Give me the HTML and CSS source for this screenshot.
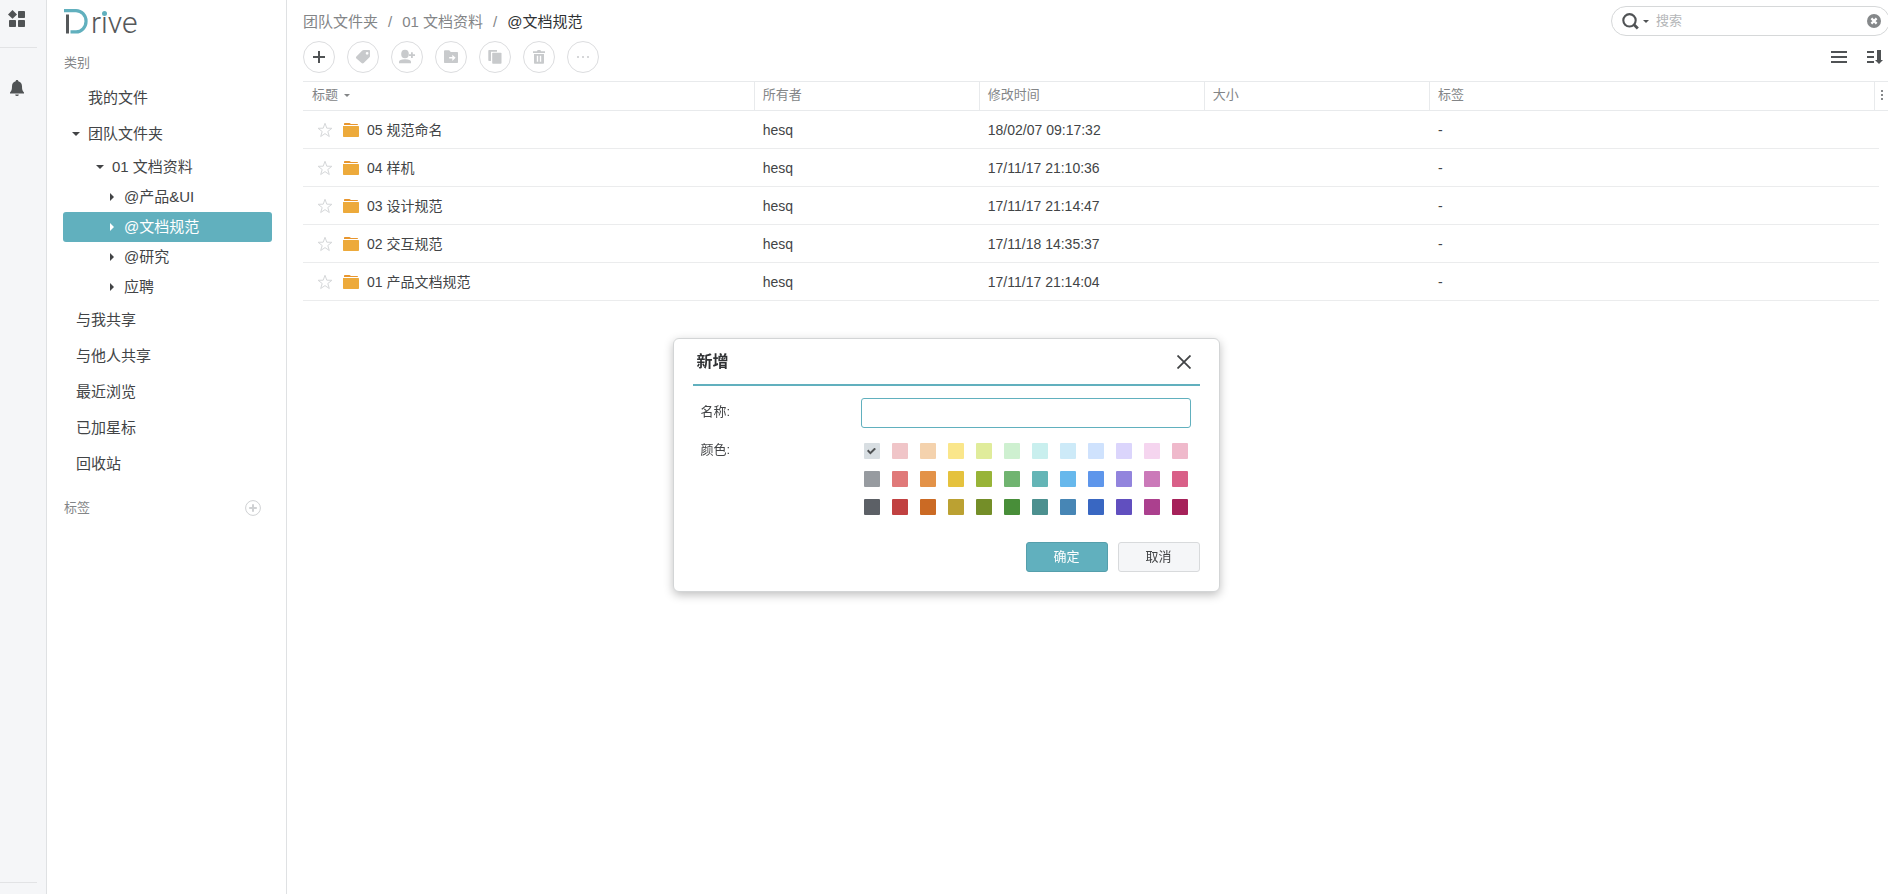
FILE: index.html
```html
<!DOCTYPE html>
<html lang="zh-CN">
<head>
<meta charset="utf-8">
<title>Drive</title>
<link rel="stylesheet" href="styles.css">
</head>
<body>
<div class="app">
  <nav class="rail" aria-label="应用">
    <button class="rail-btn apps" aria-label="应用列表">
      <svg width="18" height="18" viewBox="0 0 18 18" fill="currentColor"><path d="M4.500 0 9 4.400 4.500 8.800 0 4.400z"/><rect x="10" y="1" width="7" height="7" rx=".8"/><rect x="1" y="10" width="7" height="7" rx=".8"/><rect x="10" y="10" width="7" height="7" rx=".8"/></svg>
    </button>
    <button class="rail-btn bell" aria-label="通知">
      <svg width="14" height="16" viewBox="0 0 14 16" fill="currentColor"><path d="M7 0c.8 0 1.300.5 1.300 1.200C10.700 1.800 12 3.800 12 6.300c0 3.200.4 4.700 2 6.200v1H0v-1c1.600-1.500 2-3 2-6.200 0-2.500 1.300-4.500 3.700-5.100C5.700.5 6.200 0 7 0z"/><path d="M5.200 14.400h3.600a1.800 1.600 0 0 1-3.600 0z"/></svg>
    </button>
  </nav>

  <aside class="sidebar">
    <a class="logo" href="#" aria-label="Drive">
      <svg class="logo-mark" width="24" height="25" viewBox="0 0 24 25" fill="none"><path d="M3.500 5.500v19" stroke="#55585a" stroke-width="3"/><path d="M0 1.600h12a10 10.600 0 0 1 0 21.300H6.500" stroke="#61b0be" stroke-width="3.200"/></svg>
      <span class="logo-text">r<span class="logo-i">i</span>ve</span>
    </a>
    <h2 class="group-label">类别</h2>
    <ul class="tree">
      <li><a class="item lead" href="#">我的文件</a></li>
      <li>
        <a class="item" href="#"><span class="arrow down"></span>团队文件夹</a>
        <ul class="subtree">
          <li><a class="item deep" href="#"><span class="arrow down"></span>01 文档资料</a>
            <ul class="leaves">
              <li><a class="item" href="#"><span class="arrow right"></span>@产品&amp;UI</a></li>
              <li><a class="item selected" href="#"><span class="arrow right"></span>@文档规范</a></li>
              <li><a class="item" href="#"><span class="arrow right"></span>@研究</a></li>
              <li><a class="item" href="#"><span class="arrow right"></span>应聘</a></li>
            </ul>
          </li>
        </ul>
      </li>
      <li><a class="item plain" href="#">与我共享</a></li>
      <li><a class="item plain" href="#">与他人共享</a></li>
      <li><a class="item plain" href="#">最近浏览</a></li>
      <li><a class="item plain" href="#">已加星标</a></li>
      <li><a class="item plain" href="#">回收站</a></li>
    </ul>
    <div class="tags-head">
      <h2 class="group-label">标签</h2>
      <button class="add-tag" aria-label="新增标签"><svg width="16" height="16" viewBox="0 0 16 16" fill="none" stroke="currentColor"><circle cx="8" cy="8" r="7.400"/><path d="M8 4.200v7.600M4.200 8h7.600" stroke-width="2"/></svg></button>
    </div>
  </aside>

  <main class="main">
    <header class="topbar">
      <nav class="crumbs" aria-label="路径"><a href="#">团队文件夹</a><span class="sep">/</span><a href="#">01 文档资料</a><span class="sep">/</span><a class="current" href="#">@文档规范</a></nav>
      <form class="search">
        <button type="button" class="search-mode" aria-label="搜索选项"><svg width="17" height="17" viewBox="0 0 17 17" fill="none" stroke="currentColor"><circle cx="7.500" cy="7.300" r="6.200" stroke-width="2.100"/><path d="m11.800 11.600 4 4" stroke-width="2.800"/></svg><span class="arrow down small"></span></button>
        <input type="text" placeholder="搜索" aria-label="搜索">
        <button type="reset" class="clear" aria-label="清除"><svg width="14" height="14" viewBox="0 0 14 14"><circle cx="7" cy="7" r="7" fill="currentColor"/><path d="m4.400 4.400 5.200 5.200m0-5.200L4.400 9.600" stroke="#fff" stroke-width="2.200"/></svg></button>
      </form>
    </header>

    <div class="toolbar">
      <div class="actions">
        <button class="round primary" aria-label="新增"><svg width="16" height="16" viewBox="0 0 16 16" stroke="currentColor" stroke-width="2"><path d="M8 2v12M2 8h12"/></svg></button>
        <button class="round" aria-label="标签"><svg width="16" height="16" viewBox="0 0 16 16" fill="currentColor" fill-rule="evenodd"><path d="M8.800 1h5.400c.5 0 .8.300.8.800v5.300c0 .5-.2.900-.5 1.200l-5.800 5.800c-.6.600-1.500.6-2.100 0L1.400 9.600c-.6-.6-.6-1.500 0-2.100l5.900-5.900c.4-.4.900-.6 1.500-.6zm3.300 1.900a1.400 1.400 0 1 0 0 2.800 1.400 1.400 0 0 0 0-2.800z"/></svg></button>
        <button class="round" aria-label="共享"><svg width="18" height="16" viewBox="0 0 18 16" fill="currentColor"><ellipse cx="7" cy="5" rx="3.800" ry="4.300"/><path d="M1 14.200v-1.400c0-1.700 2-2.600 6-2.600s6 .9 6 2.600v1.400zM13 3.300h1.800v2H17v1.800h-2.200v2H13v-2h-2V5.300h2z"/></svg></button>
        <button class="round" aria-label="移动"><svg width="16" height="16" viewBox="0 0 16 16" fill="currentColor" fill-rule="evenodd"><path d="M2 1.200h4.200l1.600 1.900H14c.6 0 1 .4 1 1v9c0 .6-.4 1-1 1H2c-.6 0-1-.4-1-1v-11c0-.5.4-.9 1-.9zM9.300 5.700v2.400H6.200v1.400h3.100v2.400L12.600 8.800z"/></svg></button>
        <button class="round" aria-label="复制"><svg width="16" height="16" viewBox="0 0 16 16" fill="currentColor"><path d="M2.300 1H10v1.800H4V12H2c-.4 0-.7-.3-.7-.8V2c0-.6.400-1 1-1z"/><rect x="5.200" y="3.800" width="9.300" height="11" rx=".8"/></svg></button>
        <button class="round" aria-label="删除"><svg width="16" height="16" viewBox="0 0 16 16" fill="currentColor" fill-rule="evenodd"><path d="M2 2.200h4l.6-1.100h2.800l.6 1.100h4V4H2zM3 5h10v8.800c0 .6-.4 1-1 1H4c-.6 0-1-.4-1-1zm2.800 1.800v6h1.400v-6zm3 0v6h1.400v-6z"/></svg></button>
        <button class="round" aria-label="更多"><svg width="16" height="16" viewBox="0 0 16 16" fill="currentColor"><circle cx="3" cy="8" r="1"/><circle cx="8" cy="8" r="1"/><circle cx="13" cy="8" r="1"/></svg></button>
      </div>
      <div class="views">
        <button aria-label="列表视图"><svg width="16" height="14" viewBox="0 0 16 14" fill="currentColor"><path d="M0 1h16v2H0zM0 6h16v2H0zM0 11h16v2H0z"/></svg></button>
        <button aria-label="排序"><svg width="16" height="14" viewBox="0 0 16 14" fill="currentColor"><path d="M0 1h7v2H0zM0 6h7v2H0zM0 11h7v2H0zM10 0h4v10h2l-4 4-4-4h2z"/></svg></button>
      </div>
    </div>

    <table class="files">
      <colgroup><col class="c-title"><col class="c-mid"><col class="c-mid"><col class="c-mid"><col><col class="c-gap"><col class="c-end"></colgroup>
      <thead>
        <tr><th>标题<span class="arrow down small"></span></th><th>所有者</th><th>修改时间</th><th>大小</th><th>标签</th><th class="cols" colspan="2"><button aria-label="列设置"><svg width="2" height="10" viewBox="0 0 2 10" fill="currentColor"><path d="M0 0h2v2H0zM0 4h2v2H0zM0 8h2v2H0z"/></svg></button></th></tr>
      </thead>
      <tbody>
        <tr><td><div class="name"><svg class="star" width="16" height="16" viewBox="0 0 16 16"><path d="m8 1.300 1.800 4.900 5.100.1-4.100 3.200 1.500 5L8 11.600l-4.300 2.900 1.500-5-4.100-3.200 5.100-.1z"/></svg><svg class="folder" width="16" height="14" viewBox="0 0 16 14"><path d="M1 2V1c0-.6.400-1 1-1h4.500L8 1h6c.6 0 1 .4 1 1z" fill="#e8962e"/><path d="M0 3h15c.6 0 1 .4 1 1v9c0 .6-.4 1-1 1H1c-.6 0-1-.4-1-1z" fill="#edaa3b"/></svg>05 规范命名</div></td><td>hesq</td><td>18/02/07 09:17:32</td><td></td><td>-</td><td></td><td class="edge"></td></tr>
        <tr><td><div class="name"><svg class="star" width="16" height="16" viewBox="0 0 16 16"><path d="m8 1.300 1.800 4.900 5.100.1-4.100 3.200 1.500 5L8 11.600l-4.300 2.900 1.500-5-4.100-3.200 5.100-.1z"/></svg><svg class="folder" width="16" height="14" viewBox="0 0 16 14"><path d="M1 2V1c0-.6.400-1 1-1h4.500L8 1h6c.6 0 1 .4 1 1z" fill="#e8962e"/><path d="M0 3h15c.6 0 1 .4 1 1v9c0 .6-.4 1-1 1H1c-.6 0-1-.4-1-1z" fill="#edaa3b"/></svg>04 样机</div></td><td>hesq</td><td>17/11/17 21:10:36</td><td></td><td>-</td><td></td><td class="edge"></td></tr>
        <tr><td><div class="name"><svg class="star" width="16" height="16" viewBox="0 0 16 16"><path d="m8 1.300 1.800 4.900 5.100.1-4.100 3.200 1.500 5L8 11.600l-4.300 2.900 1.500-5-4.100-3.200 5.100-.1z"/></svg><svg class="folder" width="16" height="14" viewBox="0 0 16 14"><path d="M1 2V1c0-.6.400-1 1-1h4.500L8 1h6c.6 0 1 .4 1 1z" fill="#e8962e"/><path d="M0 3h15c.6 0 1 .4 1 1v9c0 .6-.4 1-1 1H1c-.6 0-1-.4-1-1z" fill="#edaa3b"/></svg>03 设计规范</div></td><td>hesq</td><td>17/11/17 21:14:47</td><td></td><td>-</td><td></td><td class="edge"></td></tr>
        <tr><td><div class="name"><svg class="star" width="16" height="16" viewBox="0 0 16 16"><path d="m8 1.300 1.800 4.900 5.100.1-4.100 3.200 1.500 5L8 11.600l-4.300 2.900 1.500-5-4.100-3.200 5.100-.1z"/></svg><svg class="folder" width="16" height="14" viewBox="0 0 16 14"><path d="M1 2V1c0-.6.400-1 1-1h4.500L8 1h6c.6 0 1 .4 1 1z" fill="#e8962e"/><path d="M0 3h15c.6 0 1 .4 1 1v9c0 .6-.4 1-1 1H1c-.6 0-1-.4-1-1z" fill="#edaa3b"/></svg>02 交互规范</div></td><td>hesq</td><td>17/11/18 14:35:37</td><td></td><td>-</td><td></td><td class="edge"></td></tr>
        <tr><td><div class="name"><svg class="star" width="16" height="16" viewBox="0 0 16 16"><path d="m8 1.300 1.800 4.900 5.100.1-4.100 3.200 1.500 5L8 11.600l-4.300 2.900 1.500-5-4.100-3.200 5.100-.1z"/></svg><svg class="folder" width="16" height="14" viewBox="0 0 16 14"><path d="M1 2V1c0-.6.400-1 1-1h4.500L8 1h6c.6 0 1 .4 1 1z" fill="#e8962e"/><path d="M0 3h15c.6 0 1 .4 1 1v9c0 .6-.4 1-1 1H1c-.6 0-1-.4-1-1z" fill="#edaa3b"/></svg>01 产品文档规范</div></td><td>hesq</td><td>17/11/17 21:14:04</td><td></td><td>-</td><td></td><td class="edge"></td></tr>
      </tbody>
    </table>
  </main>
</div>

<div class="overlay">
  <form class="dialog" role="dialog" aria-labelledby="dlg-title">
    <header class="dialog-head">
      <h1 id="dlg-title">新增</h1>
      <button type="button" class="close" aria-label="关闭"><svg width="14" height="14" viewBox="0 0 14 14" stroke="currentColor" stroke-width="1.800"><path d="m.5.5 13 13m0-13-13 13"/></svg></button>
    </header>
    <div class="fields">
      <label for="tag-name">名称:</label>
      <input class="text" id="tag-name" type="text">
      <span class="field-label" id="color-label">颜色:</span>
      <div class="swatches" role="radiogroup" aria-labelledby="color-label"></div>
    </div>
    <footer class="dialog-foot">
      <button type="button" class="btn ok">确定</button>
      <button type="button" class="btn">取消</button>
    </footer>
  </form>
</div>
<script src="swatches.js"></script>
</body>
</html>
```

FILE: styles.css
```css
* { box-sizing: border-box; }
body {
  margin: 0;
  font-family: "Liberation Sans", "Noto Sans CJK SC", sans-serif;
  font-size: 15px;
  line-height: 20px;
  color: #424446;
  background: #fff;
  overflow: hidden;
}
button { padding: 0; border: 0; background: none; font: inherit; color: inherit; cursor: pointer; }
button svg { display: block; }
a { color: inherit; text-decoration: none; }
ul { margin: 0; padding: 0; list-style: none; }
h1, h2 { margin: 0; }

.app { display: flex; min-height: 100vh; }

.rail {
  flex: none;
  width: 47px;
  display: flex;
  flex-direction: column;
  background: #f5f6f8;
  border-right: 1px solid #dfe1e3;
  color: #505355;
}
.rail-btn { padding-left: 8px; text-align: left; }
.apps { width: 37px; height: 48px; padding-bottom: 10px; border-bottom: 1px solid #e2e3e5; }
.bell { padding: 32px 0 0 10px; }
.rail::after { content: ""; width: 37px; height: 11px; margin-top: auto; border-top: 1px solid #e2e3e5; }

.sidebar { flex: none; width: 240px; padding: 9px 14px 0 16px; border-right: 1px solid #dfe1e3; }
.logo { display: flex; height: 34px; margin-left: 1px; }
.logo-text { margin-left: 3px; font-family: Roboto, sans-serif; font-weight: 300; font-size: 30px; line-height: 28px; color: #55585a; }
.logo-i { position: relative; }
.logo-i::after { content: ""; position: absolute; left: 1px; top: 6px; width: 5px; height: 5px; border-radius: 50%; background: #61b0be; }
.group-label { margin-left: 1px; font-size: 13px; font-weight: 400; line-height: 20px; color: #838587; }
.logo + .group-label { margin-top: 10px; }
.tree { padding-top: 7px; }
.item { display: flex; align-items: center; height: 36px; padding-left: 9px; border-radius: 3px; }
.item.lead { padding-left: 25px; }
.item.plain { padding-left: 13px; }
.subtree .item { height: 30px; }
.subtree .deep { padding-left: 33px; }
.leaves .item { padding-left: 45px; }
.item.selected { background: #61b0be; color: #fff; }
.arrow { flex: none; width: 16px; display: inline-flex; }
.arrow::before { content: ""; border: 4px solid transparent; }
.arrow.down::before { border-top-color: currentColor; border-bottom: 0; }
.arrow.right { padding-left: 2px; }
.arrow.right::before { border-left-color: currentColor; border-right: 0; }
.arrow.small { width: 6px; }
.arrow.small::before { border-width: 3px 3px 0; }
.tags-head { display: flex; align-items: center; justify-content: space-between; padding: 16px 11px 0 0; }
.add-tag { color: #cfd1d3; }

.main { flex: 1; min-width: 0; padding: 6px 0 0 16px; }
.topbar { display: flex; justify-content: space-between; height: 30px; }
.crumbs { display: flex; align-items: center; padding-top: 1px; color: #838587; }
.sep { margin: 0 10px; }
.current { color: #303234; }
.search { display: flex; align-items: center; width: 279px; margin-right: -2px; padding: 0 8px 0 10px; border: 1px solid #d6d8d9; border-radius: 15px; }
.search-mode { display: flex; align-items: center; gap: 4px; color: #505355; }
.search input { flex: 1; min-width: 0; margin: 0 0 0 7px; padding: 0; border: 0; outline: 0; font: inherit; font-size: 13px; background: none; }
.search input::placeholder { color: #b4b6b8; }
.clear { color: #85888a; }

.toolbar { display: flex; align-items: center; justify-content: space-between; padding: 5px 5px 8px 0; }
.actions { display: flex; gap: 12px; }
.round { display: flex; align-items: center; justify-content: center; width: 32px; height: 32px; border: 1px solid #dcdddf; border-radius: 50%; color: #c8cacc; }
.round.primary { color: #505355; }
.views { display: flex; gap: 20px; color: #505355; }

.files { width: 100%; table-layout: fixed; border-collapse: separate; border-spacing: 0; font-size: 14px; text-align: left; }
.c-title { width: 28.5%; }
.c-mid { width: 14.2%; }
.c-gap { width: 4px; }
.c-end { width: 9px; }
.files th { height: 30px; padding: 0 0 2px 8px; font-size: 13px; font-weight: 400; color: #838587; border: solid #e8eaec; border-width: 1px 1px 1px 0; }
.files th:first-child { padding-left: 9px; }
.files th .arrow { margin-left: 6px; vertical-align: middle; }
.files th.cols { padding: 0; border-right: 0; }
.cols button { margin-left: 6px; color: #85888a; }
.files td { height: 38px; padding: 0 0 0 8px; border-bottom: 1px solid #ebeced; }
.files td:nth-child(6), .files td.edge { padding: 0; }
.files td.edge { border: 0; }
.name { display: flex; align-items: center; padding-left: 6px; }
.star { fill: none; stroke: #d5d7d9; margin-right: 10px; }
.folder { margin-right: 8px; }

.overlay { position: fixed; inset: 0; padding: 338px 0 0 4px; display: flex; justify-content: center; align-items: flex-start; }
.dialog { width: 547px; padding: 0 19px 19px; background: #fff; border: 1px solid #d3d5d6; border-radius: 6px; box-shadow: 0 3px 10px rgba(0, 0, 0, .25); }
.dialog-head { display: flex; align-items: center; justify-content: space-between; height: 47px; padding: 0 9px 0 4px; border-bottom: 2px solid #61b0be; color: #303234; }
.dialog-head h1 { font-size: 16px; line-height: 24px; font-weight: 700; }
.close { color: #424446; }
.fields { display: grid; grid-template-columns: 160px 1fr; row-gap: 15px; padding: 12px 9px 0 8px; font-size: 13px; }
.fields label { padding-top: 4px; }
.field-label { margin-top: -3px; }
.text { width: 100%; height: 30px; padding: 0 8px; border: 1px solid #61b0be; border-radius: 3px; font: inherit; outline: 0; }
.swatches { display: grid; grid-template-columns: repeat(12, 16px); gap: 12px; padding-left: 3px; }
.swatches input { appearance: none; display: grid; place-items: center; width: 16px; height: 16px; margin: 0; border-radius: 1px; }
.swatches input:checked::after { content: ""; width: 9px; height: 7px; background: #505355; clip-path: polygon(0 50%, 15% 30%, 38% 60%, 82% 5%, 100% 22%, 38% 100%); }
.dialog-foot { display: flex; justify-content: flex-end; gap: 10px; padding-top: 27px; }
.btn { width: 82px; height: 30px; font-size: 13px; background: #f5f6f8; border: 1px solid #d8dadc; border-radius: 3px; }
.btn.ok { color: #fff; background: #61b0be; border-color: #559fac; }
```

FILE: swatches.js
```js
const colors = [
  ['#d8dee2', '#f0c5c8', '#f4d2ad', '#fae68b', '#e0ec9b', '#cef0d0', '#c9efee', '#cdeaf8', '#cfe2fd', '#dbd5fc', '#f5d5ef', '#efb9cb'],
  ['#979ba0', '#e07979', '#e39248', '#e5c23e', '#98b438', '#70b470', '#64b5b6', '#67b8ec', '#5e96eb', '#9284dd', '#cb79b9', '#d96088'],
  ['#5c6066', '#c14141', '#cb6a24', '#bba132', '#748e28', '#488e39', '#4c908f', '#4786b5', '#3967c2', '#614fbf', '#ab408e', '#a6215a']
];
const box = document.querySelector('.swatches');
colors.flat().forEach((color, i) => {
  const input = document.createElement('input');
  input.type = 'radio';
  input.name = 'color';
  input.value = color;
  input.checked = i === 0;
  input.setAttribute('aria-label', color);
  input.style.background = color;
  box.append(input);
});
```
